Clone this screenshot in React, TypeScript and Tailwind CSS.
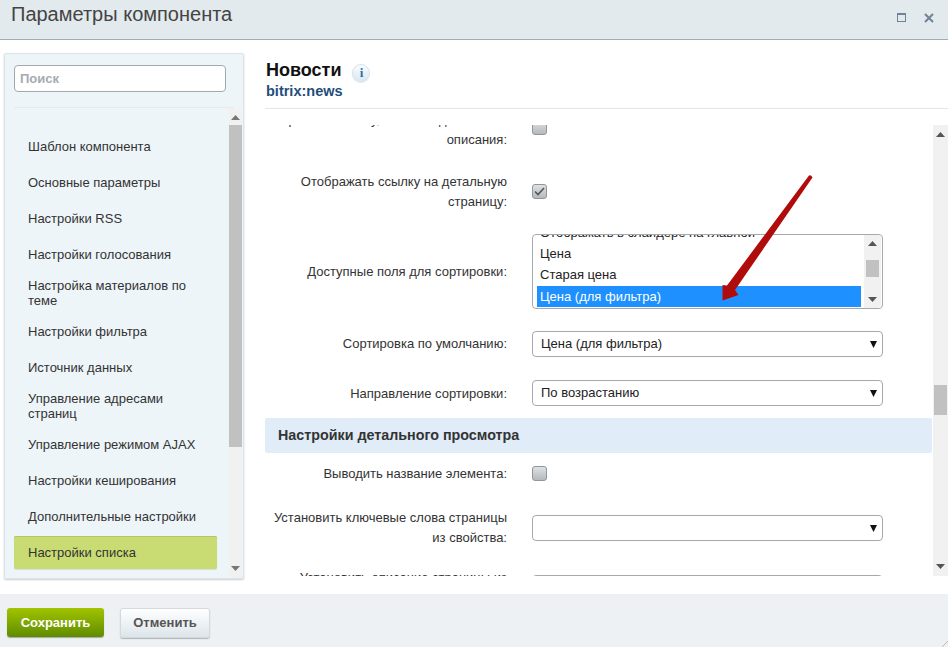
const NAV_ITEMS = [
  'Шаблон компонента',
  'Основные параметры',
  'Настройки RSS',
  'Настройки голосования',
  'Настройка материалов по теме',
  'Настройки фильтра',
  'Источник данных',
  'Управление адресами страниц',
  'Управление режимом AJAX',
  'Настройки кеширования',
  'Дополнительные настройки',
  'Настройки списка',
  'Настройки постраничной',
]

function Triangle({ up = false, className = '' }: { up?: boolean; className?: string }) {
  return (
    <svg width="9" height="5" viewBox="0 0 9 5" className={className}>
      <path d={up ? 'M4.5 0L9 5H0z' : 'M0 0h9L4.5 5z'} fill="currentColor" />
    </svg>
  )
}

function Checkbox({ checked = false }: { checked?: boolean }) {
  return (
    <div className="w-[15px] h-[15px] rounded-[3px] border border-[#8f979c] bg-gradient-to-b from-[#dfe2e4] to-[#b4b9bd] flex items-center justify-center">
      {checked && (
        <svg width="11" height="9" viewBox="0 0 11 9">
          <path d="M1 4.5L4 7.5L10 1" fill="none" stroke="#555" strokeWidth="1.6" />
        </svg>
      )}
    </div>
  )
}

function Select({ value = '' }: { value?: string }) {
  return (
    <div className="w-[351px] h-[26px] rounded-[4px] border border-[#a5a9ac] bg-white flex items-center justify-between pl-2 pr-[5px] text-[13px] text-[#222]">
      <span>{value}</span>
      <svg width="7" height="7" viewBox="0 0 7 7">
        <path d="M0 0h7L3.5 7z" fill="#111" />
      </svg>
    </div>
  )
}

function Row({ label, className = '', labelClass = '', children }: { label: React.ReactNode; className?: string; labelClass?: string; children: React.ReactNode }) {
  return (
    <div className={`flex items-center ${className}`}>
      <div className={`w-[242px] shrink-0 text-right leading-5 text-[13px] text-[#333] whitespace-nowrap ${labelClass}`}>{label}</div>
      <div className="ml-[25px]">{children}</div>
    </div>
  )
}

function Scrollbar({ thumbClass }: { thumbClass: string }) {
  return (
    <div className="w-[13px] mr-px shrink-0 bg-[#f1f1f1] flex flex-col items-center py-[7px] text-[#777]">
      <Triangle up className="shrink-0" />
      <div className={`w-full bg-[#c1c1c1] shrink-0 ${thumbClass}`} />
      <Triangle className="shrink-0 mt-auto" />
    </div>
  )
}

function Sidebar() {
  return (
    <aside className="w-[240px] h-[526px] ml-1 mt-[13px] shrink-0 rounded-[2px] border border-[#dbe4ea] bg-[#eef5f9] shadow-[0_1px_2px_rgba(0,0,0,0.2)] flex flex-col overflow-hidden">
      <div className="h-[54px] shrink-0 mx-[9px] pt-[11px] border-b border-[#e3ebef]">
        <div className="w-[212px] h-[27px] rounded-[4px] border border-[#a3a9ad] bg-white px-[5px] text-[13px] font-bold leading-[25px] text-[#a5abb0]">
          Поиск
        </div>
      </div>
      <div className="flex-1 flex min-h-0">
        <div className="flex-1 min-w-0 overflow-hidden pt-[22px] pl-[9px] pr-[12px]">
          {NAV_ITEMS.map(item => (
            <div
              key={item}
              className={`min-h-[33px] mb-[3px] py-1 pl-[14px] pr-3 flex items-center text-[13px] leading-[15px] text-[#333] rounded-[2px] ${
                item === 'Настройки списка' ? 'bg-[#c9dc74] shadow-[inset_0_1px_0_#b3c565,0_1px_1px_rgba(0,0,0,0.1)]' : ''
              }`}
            >
              {item}
            </div>
          ))}
        </div>
        <Scrollbar thumbClass="h-[322px] mt-[5px]" />
      </div>
    </aside>
  )
}

function ListBox() {
  return (
    <div className="w-[351px] h-[75px] rounded-[4px] border border-[#a5a9ac] bg-white flex text-[13px] text-[#222] overflow-hidden pl-1 pr-[1px]">
      <div className="flex-1 min-w-0 -mt-[13px] mr-[3px]">
        <div className="h-[21px] leading-[21px] pl-[3px]">Отображать в слайдере на главной</div>
        <div className="h-[21px] leading-[21px] pl-[3px]">Цена</div>
        <div className="h-[22px] leading-[21px] pl-[3px]">Старая цена</div>
        <div className="h-[21px] leading-[21px] pl-[3px] bg-[#1e90ff] text-white">Цена (для фильтра)</div>
      </div>
      <div className="w-[17px] shrink-0 bg-[#f1f1f1] flex flex-col items-center py-[6px] text-[#555]">
        <Triangle up className="shrink-0" />
        <div className="w-[13px] h-[17px] mt-[14px] bg-[#c1c1c1] shrink-0" />
        <Triangle className="shrink-0 mt-auto" />
      </div>
    </div>
  )
}

function Form() {
  return (
    <div className="flex-1 min-w-0 h-[451px] mt-[16px] overflow-hidden">
      <div className="-mt-[16px]">
        <Row label={<>Скрывать ссылку, если нет детального<br />описания:</>} className="h-10 items-start" labelClass="pt-px">
          <div className="mt-[11px]"><Checkbox /></div>
        </Row>
        <Row label={<>Отображать ссылку на детальную<br />страницу:</>} className="h-10 mt-[22px]" labelClass="pt-[2px]">
          <Checkbox checked />
        </Row>
        <Row label="Доступные поля для сортировки:" className="mt-[23px]">
          <ListBox />
        </Row>
        <Row label="Сортировка по умолчанию:" className="mt-[22px]">
          <Select value="Цена (для фильтра)" />
        </Row>
        <Row label="Направление сортировки:" className="mt-[23px]" labelClass="pt-[2px]">
          <Select value="По возрастанию" />
        </Row>
        <div className="mt-3 h-[35px] rounded-[2px] bg-[#e0ecf7] pl-[13px] text-[14.3px] font-bold leading-[35px] text-[#333]">
          Настройки детального просмотра
        </div>
        <Row label="Выводить название элемента:" className="mt-[10px] h-5" labelClass="pt-[2px]">
          <Checkbox />
        </Row>
        <Row label={<>Установить ключевые слова страницы<br />из свойства:</>} className="mt-[25px] h-10">
          <Select />
        </Row>
        <Row label={<>Установить описание страницы из<br />свойства:</>} className="mt-5 h-10">
          <Select />
        </Row>
      </div>
    </div>
  )
}

export default function App() {
  return (
    <div className="relative w-[948px] h-[647px] overflow-hidden bg-white flex flex-col font-['Liberation_Sans',Arial,sans-serif]">
      {/* Title bar */}
      <header className="h-10 shrink-0 bg-[#e2eaed] border-b border-[#a3abaf] flex items-center justify-between pl-[11px] pr-[14px] pb-[11px]">
        <h1 className="text-[20px] text-[#444]">Параметры компонента</h1>
        <div className="flex items-center gap-[18px] mt-[7px]">
          <div className="w-[9px] h-[9px] border border-[#6f8296] border-t-2" />
          <svg width="10" height="10" viewBox="0 0 10 10">
            <path d="M1 1l8 8M9 1l-8 8" stroke="#6f8296" strokeWidth="2" />
          </svg>
        </div>
      </header>

      <div className="flex-1 min-h-0 flex">
        <Sidebar />
        <main className="flex-1 min-w-0 ml-[21px] flex flex-col">
          <div className="h-[69px] shrink-0 border-b border-[#e4e6e8] pt-[20px] pl-px">
            <div className="flex items-start h-5 text-[18px] font-bold leading-5 text-[#111]">
              Новости
              <span className="ml-[11px] mt-1 w-[18px] h-[18px] rounded-full border border-[#d5e2ec] bg-gradient-to-b from-[#f9fcfd] to-[#dbe8f1] shadow-[0_1px_1px_rgba(0,0,0,0.1)] text-[#2a6fb0] text-[13px] font-['Liberation_Serif',serif] font-bold leading-[16px] text-center">
                i
              </span>
            </div>
            <div className="text-[14.5px] font-bold leading-4 mt-[3px] text-[#1f4d7a]">bitrix:news</div>
          </div>
          <div className="flex">
            <Form />
            <div className="h-[451px] mt-[16px] flex">
              <div className="w-[15px] ml-px bg-[#f1f1f1] flex flex-col items-center py-[7px] text-[#555]">
                <Triangle up className="shrink-0" />
                <div className="w-[13px] h-[30px] mt-[248px] bg-[#c1c1c1] shrink-0" />
                <Triangle className="shrink-0 mt-auto" />
              </div>
            </div>
          </div>
        </main>
      </div>

      {/* Footer */}
      <footer className="h-[53px] shrink-0 bg-[#edf1f4] flex items-center pl-[7px] gap-4 pt-1">
        <button className="w-[97px] h-[29px] rounded-[3px] bg-gradient-to-b from-[#a2c400] to-[#5f8c00] text-[13px] font-bold text-white shadow-[0_1px_1px_rgba(0,0,0,0.3)]">
          Сохранить
        </button>
        <button className="w-[90px] h-[30px] rounded-[3px] border border-[#d3dade] bg-gradient-to-b from-white to-[#dde5ea] text-[13px] font-bold text-[#555] shadow-[0_1px_1px_rgba(0,0,0,0.25)]">
          Отменить
        </button>
      </footer>

      {/* Annotation arrow over the form */}
      <svg className="absolute left-0 top-0 pointer-events-none" width="948" height="647" viewBox="0 0 948 647">
        <path d="M809 175.5Q811 174.5 812.5 177.5L735 290L738.5 295L722.5 300.5L722.5 285L727 285.5z" fill="#b00c0c" />
      </svg>

      {/* Resize grip */}
      <svg className="absolute right-0 bottom-0" width="6" height="6" viewBox="0 0 6 6">
        <path d="M0 6L6 0" stroke="#b5bcc0" />
      </svg>
    </div>
  )
}
